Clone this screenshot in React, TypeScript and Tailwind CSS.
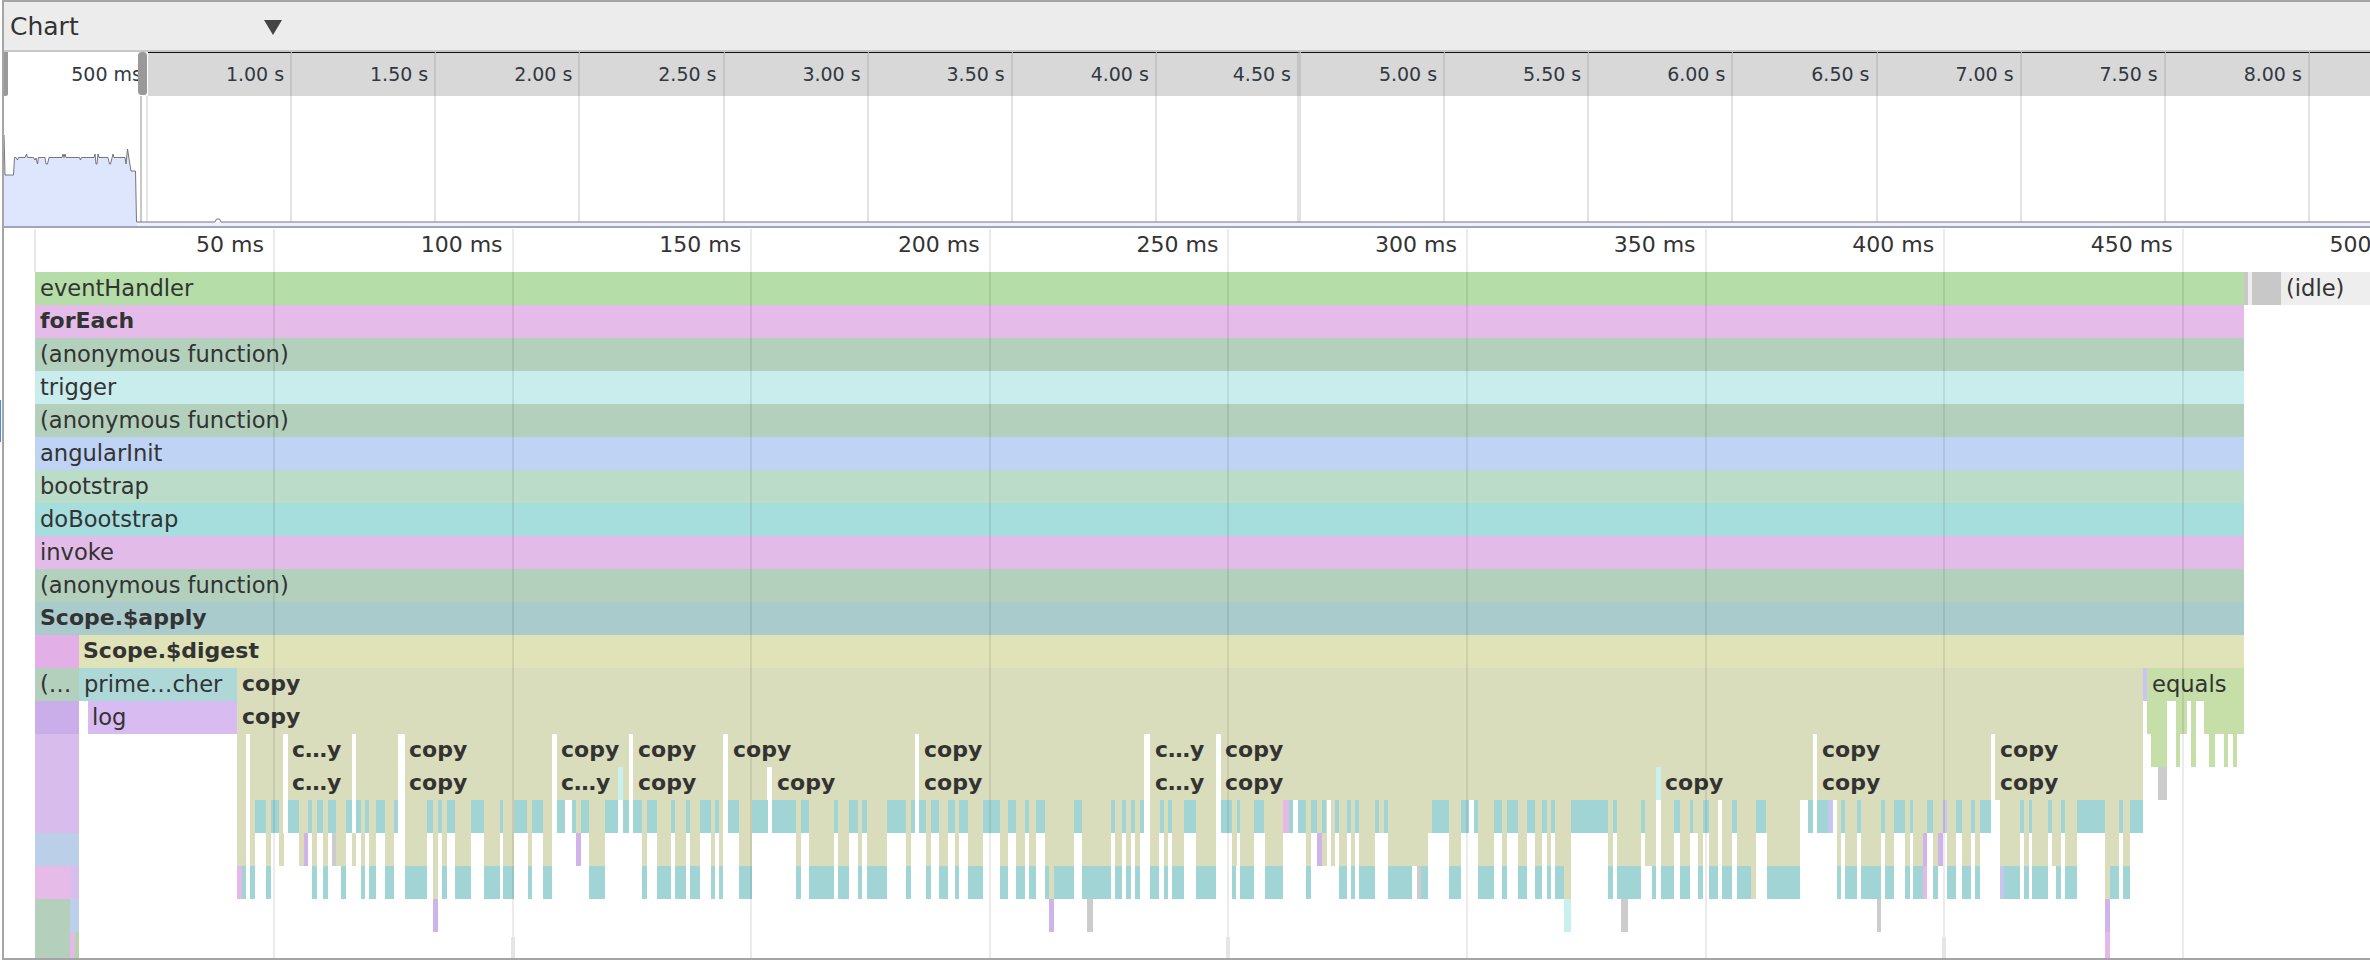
type Range = [number, number];
type Seg = { a: number; b: number; c: string };
type Label = { x: number; text: string; bold?: boolean };

const FONT = "font-['DejaVu_Sans',sans-serif]";

// page x of the end of the recorded call tree
const END = 2244;
const OLIVE = 'bg-[#d9ddbb]';
const TEAL = 'bg-[#a1d5d5]';
const WHITE = 'bg-white';
const PURPLE = 'bg-[#cfb4ea]';
const PINK = 'bg-[#e4b9e8]';
const LAVENDER = 'bg-[#c6c6ee]';
const GREY = 'bg-[#cccccc]';
const CYAN = 'bg-[#c7f0ee]';
const GREEN = 'bg-[#c6dfa9]';

const spans = (c: string, list: Range[]): Seg[] => list.map(([a, b]) => ({ a, b, c }));

const topGaps: Range[] = [
  [246, 250], [283, 288], [352, 356], [398, 405], [552, 557], [629, 633], [723, 728], [915, 919],
  [1144, 1150], [1216, 1221], [1813, 1817], [1991, 1995],
];

const tealMid: Range[] = [
  [255, 266], [271, 279], [288, 299], [308, 312], [317, 323], [328, 336], [346, 352], [356, 361], [365, 369],
  [376, 385], [394, 398], [427, 433], [438, 442], [447, 455], [471, 484], [500, 503], [514, 527], [532, 543],
  [557, 565], [572, 576], [581, 589], [605, 618], [623, 629], [633, 642], [647, 657], [671, 675], [686, 690],
  [700, 711], [715, 719], [728, 739], [752, 768], [772, 796], [801, 809], [834, 838], [849, 858], [862, 867],
  [887, 906], [911, 915], [919, 926], [931, 939], [948, 955], [959, 968], [983, 1000], [1008, 1016], [1025, 1029],
  [1036, 1045], [1074, 1082], [1111, 1115], [1122, 1126], [1131, 1135], [1140, 1144], [1160, 1164], [1168, 1172],
  [1184, 1196], [1221, 1232], [1237, 1240], [1254, 1264], [1289, 1293], [1298, 1306], [1311, 1317], [1322, 1326],
  [1335, 1339], [1347, 1351], [1355, 1359], [1375, 1379], [1384, 1388], [1432, 1449], [1461, 1469], [1474, 1478],
  [1494, 1502], [1507, 1518], [1527, 1535], [1542, 1547], [1551, 1555], [1571, 1608], [1613, 1617], [1641, 1645],
  [1674, 1680], [1690, 1693], [1703, 1709], [1732, 1737], [1756, 1766], [1808, 1813], [1817, 1828], [1841, 1845],
  [1857, 1861], [1881, 1885], [1894, 1905], [1910, 1913], [1927, 1933], [1956, 1962], [1971, 1975], [1980, 1991],
  [2020, 2024], [2029, 2032], [2048, 2052], [2061, 2065], [2077, 2105], [2119, 2123], [2130, 2143],
];
const whiteMid: Range[] = [
  [565, 572], [618, 623], [768, 772], [1293, 1298], [1327, 1331], [1469, 1474], [1656, 1661], [1718, 1722],
  [1800, 1808], [1833, 1837], [1995, 2000],
];

const oliveLow: Range[] = [
  [237, 246], [250, 255], [266, 271], [279, 284], [299, 304], [312, 317], [323, 328], [336, 346], [352, 356],
  [361, 365], [369, 376], [385, 394], [405, 427], [433, 438], [442, 447], [455, 471], [484, 500], [503, 514],
  [528, 532], [543, 552], [589, 605], [642, 647], [657, 671], [675, 686], [690, 700], [711, 715], [719, 723],
  [739, 752], [796, 801], [809, 834], [838, 849], [858, 862], [867, 887], [906, 911], [926, 931], [939, 948],
  [955, 959], [968, 983], [1000, 1008], [1016, 1025], [1029, 1036], [1045, 1074], [1082, 1111], [1115, 1122],
  [1126, 1131], [1135, 1140], [1150, 1159], [1164, 1168], [1172, 1184], [1196, 1216], [1232, 1237], [1240, 1254],
  [1265, 1283], [1306, 1311], [1322, 1327], [1331, 1335], [1339, 1347], [1351, 1355], [1359, 1375], [1388, 1428],
  [1449, 1461], [1478, 1494], [1502, 1507], [1518, 1527], [1535, 1542], [1547, 1551], [1555, 1571], [1608, 1613],
  [1617, 1641], [1645, 1656], [1661, 1674], [1680, 1690], [1698, 1703], [1709, 1718], [1722, 1732], [1737, 1756],
  [1767, 1800], [1837, 1841], [1845, 1857], [1861, 1881], [1885, 1894], [1905, 1910], [1913, 1923], [1933, 1938],
  [1947, 1956], [1962, 1971], [1975, 1980], [2000, 2020], [2024, 2029], [2032, 2048], [2052, 2061], [2065, 2077],
  [2105, 2119], [2123, 2130],
];

const tealDeep: Range[] = [
  [242, 246], [250, 255], [266, 271], [312, 317], [323, 328], [341, 346], [361, 365], [369, 376], [385, 394],
  [405, 427], [442, 447], [455, 471], [484, 500], [503, 514], [528, 532], [543, 552], [589, 605], [642, 647],
  [657, 671], [675, 686], [690, 700], [711, 715], [719, 723], [739, 752], [796, 801], [809, 834], [838, 849],
  [858, 862], [867, 887], [906, 911], [926, 931], [939, 948], [955, 959], [968, 983], [1000, 1008], [1016, 1025],
  [1029, 1036], [1045, 1049], [1054, 1074], [1082, 1111], [1115, 1122], [1126, 1131], [1135, 1140], [1150, 1159],
  [1164, 1168], [1172, 1184], [1196, 1216], [1232, 1236], [1240, 1254], [1265, 1283], [1306, 1311], [1339, 1347],
  [1351, 1355], [1359, 1375], [1388, 1412], [1421, 1428], [1449, 1461], [1478, 1494], [1502, 1507], [1518, 1527],
  [1535, 1542], [1547, 1551], [1555, 1564], [1608, 1613], [1617, 1641], [1652, 1656], [1661, 1674], [1680, 1690],
  [1698, 1703], [1709, 1718], [1722, 1732], [1737, 1751], [1767, 1800], [1837, 1841], [1845, 1857], [1861, 1881],
  [1885, 1894], [1905, 1910], [1913, 1923], [1933, 1938], [1947, 1956], [1962, 1971], [1975, 1980], [2004, 2020],
  [2024, 2029], [2032, 2048], [2056, 2061], [2065, 2077], [2110, 2119], [2123, 2130],
];

const full = (c: string): Seg[] => [{ a: 35, b: END, c }];
const stack: { segs: Seg[]; labels: Label[] }[] = [
  {
    segs: [
      ...full('bg-[#b5dda7]'),
      { a: END, b: 2248, c: 'bg-[#c8c8c8]' },
      { a: 2248, b: 2252, c: 'bg-[#eeeeee]' },
      { a: 2252, b: 2281, c: 'bg-[#c8c8c8]' },
      { a: 2281, b: 2370, c: 'bg-[#eeeeee]' },
    ],
    labels: [{ x: 40, text: 'eventHandler' }, { x: 2286, text: '(idle)' }],
  },
  { segs: full('bg-[#e5bbe9]'), labels: [{ x: 40, text: 'forEach', bold: true }] },
  { segs: full('bg-[#b2d0bc]'), labels: [{ x: 40, text: '(anonymous function)' }] },
  { segs: full('bg-[#c9eded]'), labels: [{ x: 40, text: 'trigger' }] },
  { segs: full('bg-[#b2d0bc]'), labels: [{ x: 40, text: '(anonymous function)' }] },
  { segs: full('bg-[#bfd3f5]'), labels: [{ x: 40, text: 'angularInit' }] },
  { segs: full('bg-[#bbdcc8]'), labels: [{ x: 40, text: 'bootstrap' }] },
  { segs: full('bg-[#a6dddd]'), labels: [{ x: 40, text: 'doBootstrap' }] },
  { segs: full('bg-[#e2bbe8]'), labels: [{ x: 40, text: 'invoke' }] },
  { segs: full('bg-[#b2d0bc]'), labels: [{ x: 40, text: '(anonymous function)' }] },
  { segs: full('bg-[#a9cbcb]'), labels: [{ x: 40, text: 'Scope.$apply', bold: true }] },
  {
    segs: [{ a: 35, b: 79, c: 'bg-[#e2b0e6]' }, { a: 79, b: END, c: 'bg-[#dfe3b7]' }],
    labels: [{ x: 83, text: 'Scope.$digest', bold: true }],
  },
  {
    segs: [
      { a: 35, b: 79, c: 'bg-[#b2d0bc]' },
      { a: 79, b: 237, c: 'bg-[#aed8d8]' },
      { a: 237, b: 2143, c: OLIVE },
      { a: 2143, b: 2147, c: LAVENDER },
      { a: 2147, b: END, c: GREEN },
    ],
    labels: [
      { x: 40, text: '(…' },
      { x: 84, text: 'prime…cher' },
      { x: 242, text: 'copy', bold: true },
      { x: 2152, text: 'equals' },
    ],
  },
  {
    segs: [
      { a: 35, b: 79, c: 'bg-[#c9aeea]' },
      { a: 88, b: 237, c: 'bg-[#d8bbf0]' },
      { a: 237, b: 2143, c: OLIVE },
      ...spans(GREEN, [[2147, 2167], [2176, 2187], [2191, 2196], [2204, END]]),
    ],
    labels: [{ x: 92, text: 'log' }, { x: 242, text: 'copy', bold: true }],
  },
  {
    segs: [
      { a: 35, b: 79, c: 'bg-[#d8bdec]' },
      { a: 237, b: 2143, c: OLIVE },
      ...spans(WHITE, topGaps),
      ...spans(GREEN, [[2151, 2167], [2176, 2180], [2191, 2196], [2209, 2215], [2224, 2228], [2233, 2237]]),
    ],
    labels: [
      { x: 292, text: 'c…y', bold: true },
      { x: 409, text: 'copy', bold: true },
      { x: 561, text: 'copy', bold: true },
      { x: 638, text: 'copy', bold: true },
      { x: 733, text: 'copy', bold: true },
      { x: 924, text: 'copy', bold: true },
      { x: 1155, text: 'c…y', bold: true },
      { x: 1225, text: 'copy', bold: true },
      { x: 1822, text: 'copy', bold: true },
      { x: 2000, text: 'copy', bold: true },
    ],
  },
  {
    segs: [
      { a: 35, b: 79, c: 'bg-[#d8bdec]' },
      { a: 237, b: 2143, c: OLIVE },
      ...spans(WHITE, topGaps),
      ...spans(WHITE, [[767, 772]]),
      ...spans(CYAN, [[618, 623], [1656, 1661]]),
      { a: 2158, b: 2167, c: GREY },
    ],
    labels: [
      { x: 292, text: 'c…y', bold: true },
      { x: 409, text: 'copy', bold: true },
      { x: 561, text: 'c…y', bold: true },
      { x: 638, text: 'copy', bold: true },
      { x: 777, text: 'copy', bold: true },
      { x: 924, text: 'copy', bold: true },
      { x: 1155, text: 'c…y', bold: true },
      { x: 1225, text: 'copy', bold: true },
      { x: 1665, text: 'copy', bold: true },
      { x: 1822, text: 'copy', bold: true },
      { x: 2000, text: 'copy', bold: true },
    ],
  },
  {
    segs: [
      { a: 35, b: 79, c: 'bg-[#d8bdec]' },
      { a: 237, b: 2143, c: OLIVE },
      ...spans(WHITE, topGaps),
      ...spans(WHITE, whiteMid),
      ...spans(TEAL, tealMid),
      { a: 1283, b: 1289, c: PINK },
      { a: 1828, b: 1833, c: LAVENDER },
      { a: 1943, b: 1947, c: LAVENDER },
    ],
    labels: [],
  },
  {
    segs: [
      { a: 35, b: 79, c: 'bg-[#bbcfe8]' },
      ...spans(OLIVE, oliveLow),
      ...spans(PURPLE, [[304, 308], [576, 581], [1317, 1322], [1923, 1927], [1938, 1943]]),
      { a: 332, b: 336, c: GREY },
    ],
    labels: [],
  },
  {
    segs: [
      { a: 35, b: 71, c: 'bg-[#e6bbe8]' },
      { a: 71, b: 79, c: 'bg-[#d6bfec]' },
      { a: 237, b: 242, c: PINK },
      ...spans(TEAL, tealDeep),
      ...spans(OLIVE, [[433, 438], [1049, 1054], [1564, 1571], [1751, 1756], [2105, 2110]]),
      { a: 1417, b: 1421, c: GREY },
      { a: 1923, b: 1927, c: PINK },
      { a: 2000, b: 2004, c: LAVENDER },
    ],
    labels: [],
  },
  {
    segs: [
      { a: 35, b: 70, c: 'bg-[#b4d0bc]' },
      { a: 70, b: 79, c: 'bg-[#bcd0ec]' },
      ...spans(PURPLE, [[433, 438], [1049, 1054], [2105, 2110]]),
      ...spans(GREY, [[1087, 1093], [1621, 1628], [1877, 1881]]),
      { a: 1564, b: 1571, c: CYAN },
    ],
    labels: [],
  },
];

const lastRow: Seg[] = [
  { a: 35, b: 70, c: 'bg-[#b4d0bc]' },
  { a: 70, b: 75, c: PINK },
  { a: 75, b: 79, c: 'bg-[#b4d6a8]' },
  { a: 2105, b: 2110, c: PINK },
];

const overviewTicks = ['1.00 s', '1.50 s', '2.00 s', '2.50 s', '3.00 s', '3.50 s', '4.00 s', '4.50 s', '5.00 s', '5.50 s', '6.00 s', '6.50 s', '7.00 s', '7.50 s', '8.00 s', ''];
const flameTicks = ['50 ms', '100 ms', '150 ms', '200 ms', '250 ms', '300 ms', '350 ms', '400 ms', '450 ms', '500 ms'];

const graph =
  'M4 135 L5 175 L13.5 175 L14.5 157.5 L16 157.5 L17.5 160 L18.5 157.5 L25 157.5 L26.5 154 L27.5 157.5 L33.5 157.5 L35 160 L36 158 L37.5 164 L38.5 157.5 L45 157.5 L46 164 L47.5 164 L49 157.5 L62 157.5 L63 154 L64 157.5 L65 154 L66 157.5 L79.5 157.5 L80.5 160 L81.5 157.5 L94 157.5 L95 154 L96 164 L97 164 L98 154 L99 157.5 L108 157.5 L109.5 164 L110.5 164 L113 154 L114 157.5 L125 157.5 L126 164 L127.5 149 L130 165 L131 171 L135.5 171 L136.5 222';

function Bars({ segs, labels = [] }: { segs: Seg[]; labels?: Label[] }) {
  return (
    <>
      {segs.map((s, i) => (
        <div key={i} className={`absolute inset-y-0 ${s.c}`} style={{ left: s.a - 4, width: s.b - s.a }} />
      ))}
      {labels.map((l, i) => (
        <span
          key={i}
          className={`absolute top-0 leading-[32px] whitespace-nowrap text-[#333333] ${l.bold ? 'text-[22px] font-bold' : 'text-[22.6px]'}`}
          style={{ left: l.x - 4 }}
        >
          {l.text}
        </span>
      ))}
    </>
  );
}

function Overview() {
  return (
    <div className="relative h-[176px] flex border-b-2 border-[#9fa5bb] overflow-hidden">
      <div className="w-[144px] shrink-0 flex flex-col">
        <div className="h-[44px] pr-[6px] text-right text-[19px] leading-[44px] text-[#303942] whitespace-nowrap">500 ms</div>
        <div className="flex-1 flex justify-end">
          <div className="w-[2px] mr-[4px] bg-[#c8c8c8]" />
          <div className="w-[2px] bg-[#e5e5e5]" />
        </div>
      </div>
      {overviewTicks.map((t) => {
        const thick = t === '4.50 s';
        return (
          <div key={t || 'end'} className="w-[144.14px] shrink-0 flex flex-col">
            <div
              className={`h-[44px] bg-[#d8d8d8] border-t border-t-[#111111] border-r-[#c4c4c4] pr-[6px] text-right text-[19px] leading-[43px] text-[#303942] whitespace-nowrap ${thick ? 'border-r-4' : 'border-r-2'}`}
            >
              {t}
            </div>
            <div className={`flex-1 border-r-[#e3e3e3] ${thick ? 'border-r-4' : 'border-r-2'}`} />
          </div>
        );
      })}

      {/* cpu graph, drawn in page coordinates */}
      <svg className="absolute inset-0" width={2366} height={174} viewBox="4 52 2366 174">
        <rect x={137} y={222} width={2233} height={4} fill="#eef1fc" />
        <path d={`${graph} L137 226 L4 226 Z`} fill="#dde6fd" />
        <path
          d={`${graph} L215 222 L216.5 219 L219.5 219 L221 222 L2370 222`}
          fill="none"
          stroke="#6b666b"
          strokeWidth={0.9}
        />
      </svg>

      {/* selection handles */}
      <div className="absolute left-[-1px] top-0 w-[5px] h-[44px] rounded-b-[3px] bg-[#999999]" />
      <div className="absolute left-[134px] top-0 w-[10px] h-[44px] rounded-[4px] bg-[#999999] border-r border-b border-white" />
    </div>
  );
}

function Flame() {
  return (
    <div className="relative flex-1 overflow-hidden">
      <div className="h-[44px] flex">
        <div className="w-[32.4px] shrink-0" />
        {flameTicks.map((t) => (
          <div
            key={t}
            className="w-[238.6px] shrink-0 pr-[11px] text-right text-[22px] leading-[34px] whitespace-nowrap text-[#333333]"
          >
            {t}
          </div>
        ))}
      </div>

      {stack.map((row, i) => (
        <div key={i} className="relative h-[33px]">
          <Bars segs={row.segs} labels={row.labels} />
        </div>
      ))}
      <div className="relative h-[26px]">
        <Bars segs={lastRow} />
      </div>

      {/* grid lines sit over the bars */}
      <div className="absolute inset-0 top-[1px] flex pointer-events-none">
        <div className="w-[32.4px] shrink-0 h-[43px] border-r-2 border-[#e8e8e8]" />
        {flameTicks.map((t, i) => (
          <div key={t} className="relative w-[238.6px] shrink-0 border-r-2 border-black/[0.08]">
            {i % 3 === 1 && <div className="absolute bottom-0 right-[-3px] w-[4px] h-[21px] bg-[#e5e5e5]" />}
          </div>
        ))}
      </div>
    </div>
  );
}

export default function App() {
  return (
    <div className={`w-[2370px] h-[960px] overflow-hidden bg-white flex ${FONT}`}>
      <div className="w-[2px] shrink-0 pt-[400px]">
        <div className="w-[1px] h-[42px] bg-[#4a86e8]" />
      </div>
      <div className="flex-1 min-w-0 flex flex-col border-y-2 border-l-2 border-[#a5a5a5]">
        <div className="h-[50px] shrink-0 flex items-center pl-[6px] pt-[2px] bg-[#ececec] border-b-2 border-[#c8c8c8]">
          <span className="w-[254px] text-[25px] text-[#333333]">Chart</span>
          <svg width={18} height={15} viewBox="0 0 18 15">
            <polygon points="0,0 18,0 9,15" fill="#444444" />
          </svg>
        </div>
        <Overview />
        <Flame />
      </div>
    </div>
  );
}
